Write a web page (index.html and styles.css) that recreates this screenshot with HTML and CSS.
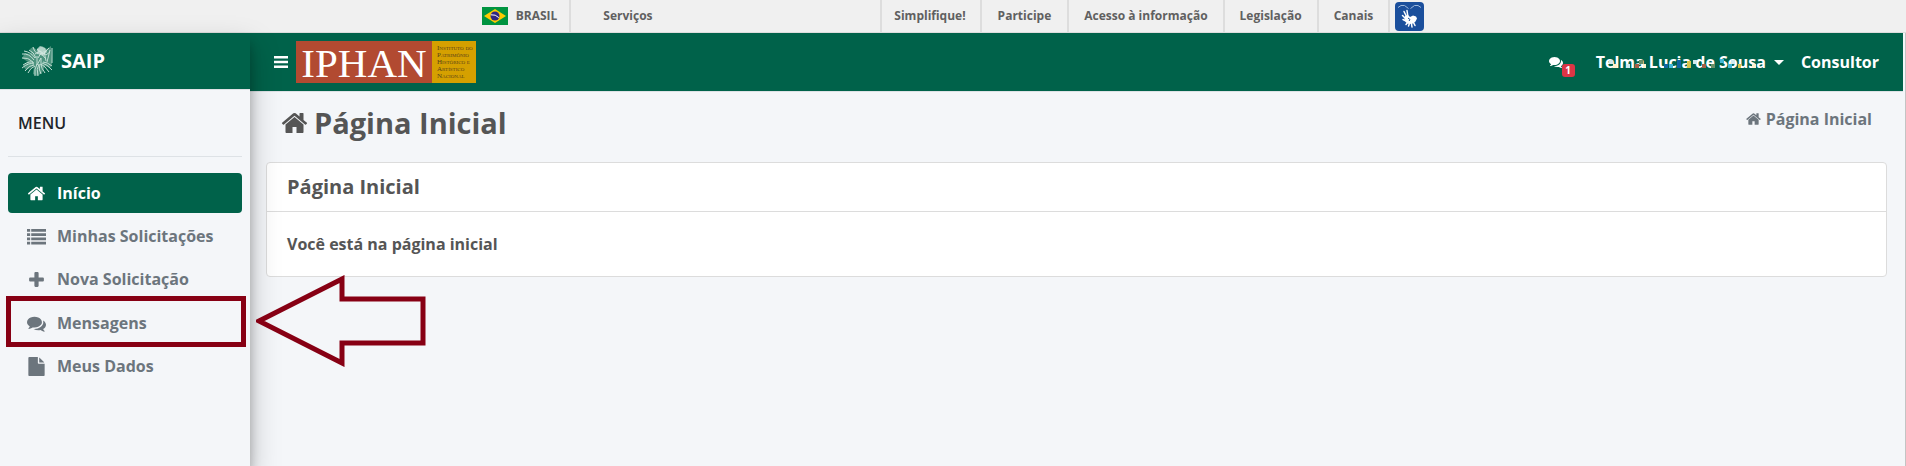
FILE: index.html
```
<!DOCTYPE html>
<html lang="pt-BR">
<head>
<meta charset="utf-8">
<title>SAIP - Página Inicial</title>
<link rel="stylesheet" href="styles.css">
</head>
<body>
<svg class="defs" aria-hidden="true">
  <symbol id="home" viewBox="0 0 1664 1792"><path d="M1408 992v480q0 26-19 45t-45 19h-384v-384h-256v384h-384q-26 0-45-19t-19-45v-480q0-1 .5-3t.5-3l575-474 575 474q1 2 1 6zm223-69l-62 74q-8 9-21 11h-3q-13 0-21-7l-692-577-692 577q-12 8-24 7-13-2-21-11l-62-74q-8-10-7-23.5t11-21.5l719-599q32-26 76-26t76 26l244 204v-195q0-14 9-23t23-9h192q14 0 23 9t9 23v408l219 182q10 8 11 21.5t-7 23.5z"/></symbol>
  <symbol id="comments" viewBox="0 0 1792 1792"><path d="M1408 768q0 139-94 257t-256.5 186.5-353.5 68.5q-86 0-176-16-124 88-278 128-36 9-86 16h-3q-11 0-20.5-8t-11.5-21q-1-3-1-6.5t.5-6.5 2-6l2.5-5 3.5-5.5 4-5 4.5-5 4-4.5q5-6 23-25t26-29.5 22.5-29 25-38.5 20.5-44q-124-72-195-177t-71-224q0-139 94-257t256.500-186.500 353.500-68.500 353.500 68.500 256.500 186.500 94 257zm384 256q0 120-71 224.500t-195 176.500q10 24 20.500 44t25 38.500 22.500 29 26 29.500 23 25q1 1 4 4.500t4.500 5 4 5 3.500 5.500l2.500 5 2 6 .5 6.500-1 6.500q-3 14-13 22t-22 7q-50-7-86-16-154-40-278-128-90 16-176 16-271 0-472-132 58 4 88 4 161 0 309-45t264-129q125-92 192-212t67-254q0-77-23-152 129 71 204 178t75 230z"/></symbol>
</svg>

<div class="govbar">
  <a class="gov-brasil" href="#">
    <svg class="flag" viewBox="0 0 26 18" aria-hidden="true"><path fill="#009440" d="M0 0h26v18H0z"/><path fill="#ffcb00" d="M13 2l11 7-11 7L2 9z"/><circle cx="13" cy="9" r="4.500" fill="#302681"/><path d="M8.800 7.800q4.800-.6 8 2.800" fill="none" stroke="#fff"/></svg>
    BRASIL</a>
  <a class="gov-services" href="#">Serviços</a>
  <nav class="gov-links">
    <a href="#">Simplifique!</a><a href="#">Participe</a><a href="#">Acesso à informação</a><a href="#">Legislação</a><a href="#">Canais</a>
  </nav>
  <a class="libras" href="#" aria-label="VLibras"><svg viewBox="0 0 29 29"><rect width="29" height="29" rx="4" fill="#1b4f9c"/><path d="M3 5.500l3-2 3.500 0 4 3M26 5.500l-3-2-3.500 0-4 3" fill="none" stroke="#9db8dc"/><g fill="none" stroke="#fff" stroke-width="1.500" stroke-linecap="round"><path d="M9 9.500l2.500 5M12 8.500l.8 5.500M7.500 13.500l3 3M8 17.500l3 1.500M20 23.500l-2-4M17 25l-.8-5M13.500 24l1.500-4M11 22.500l2.500-3"/></g><path fill="#fff" d="M10 14l3-1 2 2 3-1.500 3 1 1 2-1.500 3-2.500 2-4 .5-3-1.500-1.500-3z"/><path d="M13 16l2 1.500-1 1.500" fill="none" stroke="#1b4f9c"/></svg></a>
</div>

<div class="shell">
  <aside class="sidebar">
    <a class="brand" href="#">
      <svg class="crest" viewBox="0 0 32 32" aria-hidden="true"><path fill="#8dbcaa" opacity=".55" d="M12 2l4 3 5-4 5 3 4-3 1 18-2 4-5-2-3 7-5 3-4-2 1-8-8 4-3-4 5-4-6-4 3-5 6 1-1-5z"/><g fill="none" stroke="#c3dfd5"><path d="M1 9q7-1 12 6M3 6q7 1 11 7M1 13q6-1 11 4M2 20q7-5 11-2M1 23q7-6 12-4M4 26q4-6 9-6M7 28q2-5 7-7M14 31q-1-7 2-12M17 31q-2-7 1-12M20 29q-3-5-1-10M24 28q-4-5-4-9M28 27q-4-6-8-8M31 25q-5-6-10-7M31 21q-5-4-9-4M8 5q5 2 7 8M12 2q1 5 5 7"/><path d="M16 4l6 5 6-6M14 9l5-3 6 4 4-3M17 13l3-5 4 5M16 11v9l4-7v7M23 6l2 10M29 5l-3 12M31 3v15"/></g><path fill="#d5e8e1" opacity=".75" d="M16 4l3-3 5 2 2 4-4 4-5-2z"/></svg>
      <span>SAIP</span></a>
    <div class="menu-title">MENU</div>
    <nav class="menu">
      <a class="active" href="#"><svg><use href="#home"/></svg>Início</a>
      <a href="#"><svg viewBox="0 0 18 18"><path d="M0 2h3v2.500H0zM4 2h14v2.500H4zM0 6h3v2.500H0zM4 6h14v2.500H4zM0 10h3v2.500H0zM4 10h14v2.500H4zM0 14h3v2.500H0zM4 14h14v2.500H4z"/></svg>Minhas Solicitações</a>
      <a href="#"><svg viewBox="0 0 18 18"><path d="M8 2h2q1 0 1 1v4h4q1 0 1 1v2q0 1-1 1h-4v4q0 1-1 1H8q-1 0-1-1v-4H3q-1 0-1-1V8q0-1 1-1h4V3q0-1 1-1z"/></svg>Nova Solicitação</a>
      <a class="marked" href="#"><svg><use href="#comments"/></svg>Mensagens
        <span class="frame"></span>
        <svg class="arrow" viewBox="0 0 170 92" aria-hidden="true"><path d="M3 46L86 4v20h81v44H86v20z" fill="none" stroke="#870014" stroke-width="5"/></svg></a>
      <a href="#"><svg viewBox="0 0 1792 1792"><path d="M1152 512v-472q22 14 36 28l408 408q14 14 28 36h-472zm-128 32q0 40 28 68t68 28h544v1056q0 40-28 68t-68 28h-1344q-40 0-68-28t-28-68v-1600q0-40 28-68t68-28h800v544z"/></svg>Meus Dados</a>
    </nav>
  </aside>

  <div class="main">
    <header class="topbar">
      <button class="toggle" type="button" aria-label="Menu"><svg viewBox="0 0 14 12"><path d="M0 0h14v2.500H0zM0 4.700h14v2.500H0zM0 9.500h14V12H0z"/></svg></button>
      <a class="iphan" href="#"><span class="iphan-name">IPHAN</span><span class="iphan-full"><span>Instituto do</span><span>Patrimônio</span><span>Histórico e</span><span>Artístico</span><span>Nacional</span></span></a>
      <a class="notice" href="#" aria-label="Mensagens"><svg><use href="#comments"/></svg><span class="badge">1</span></a>
      <button class="user" type="button"><span class="user-name">Telma Lucia de Sousa<svg class="mosaic" viewBox="0 0 172 14" aria-hidden="true"><path fill="#cfe9ef" d="M13 5h4v4h-4zM30 9h4v4h-4zM98 5h4v4h-4zM136 5h4v4h-4z"/><path fill="#fff3cf" d="M47 9h4v4h-4zM17 9h4v4h-4zM158 9h4v4h-4z"/><path fill="#a55f46" d="M39 9h4v4h-4zM107 9h4v4h-4z"/><path fill="#1064a0" d="M69 9h4v4h-4zM82 5h4v8h-4z"/><path fill="#43b8d8" d="M74 9h4v4h-4zM125 4h4v4h-4zM133 9h4v4h-4z"/><path fill="#d8c44b" d="M92 6h4v7h-4zM143 9h4v4h-4z"/><path fill="#6a9067" d="M43 5h4v4h-4zM116 9h4v4h-4z"/></svg></span><span class="caret"></span></button>
      <span class="role">Consultor</span>
    </header>
    <main>
      <div class="heading">
        <h1><svg><use href="#home"/></svg>Página Inicial</h1>
        <a class="crumb" href="#"><svg><use href="#home"/></svg>Página Inicial</a>
      </div>
      <section class="card">
        <h2>Página Inicial</h2>
        <p>Você está na página inicial</p>
      </section>
    </main>
  </div>
</div>
</body>
</html>
```
FILE: styles.css
```
* { box-sizing: border-box; }
body {
  margin: 0;
  min-height: 100vh;
  display: flex;
  flex-direction: column;
  background: #f4f6f9;
  color: #555;
  font: 700 16px/24px "Open Sans", sans-serif;
}
a { color: inherit; text-decoration: none; }
button { font: inherit; color: inherit; background: none; border: 0; padding: 0; }
svg { fill: currentColor; flex: none; }
.defs { position: absolute; width: 0; height: 0; }

.govbar {
  display: flex;
  justify-content: center;
  height: 33px;
  background: #f0f0f0;
  border-bottom: 1px solid #ddd;
  color: #606060;
  font-size: 12px;
  line-height: 32px;
}
.gov-brasil { display: flex; align-items: center; gap: 8px; padding-right: 12px; border-right: 2px solid #ddd; }
.flag { width: 26px; height: 18px; }
.gov-services { width: 309px; padding-left: 32px; }
.gov-links { display: flex; }
.gov-links a { padding: 0 15px; border-left: 2px solid #ddd; }
.gov-links a:first-child { padding: 0 14px 0 12px; }
.gov-links a:nth-child(2) { padding: 0 16px; }
.gov-links a:last-child { border-right: 2px solid #ddd; }
.libras { margin: 2px 0 0 5px; height: 29px; }
.libras svg { display: block; width: 29px; height: 29px; }

.shell { flex: 1; display: flex; }
.sidebar {
  width: 250px;
  flex: none;
  position: relative;
  z-index: 1;
  background: #f4f6f9;
  box-shadow: 0 14px 28px rgba(0,0,0,.25), 0 10px 10px rgba(0,0,0,.22);
}
.brand {
  display: flex;
  align-items: center;
  gap: 8px;
  height: 57px;
  padding-left: 21px;
  background: #00624a;
  border-bottom: 1px solid #dee2e6;
  color: #fff;
  font-size: 20px;
}
.crest { width: 32px; height: 32px; }
.menu-title {
  margin: 0 8px 16px;
  padding: 21px 10px;
  border-bottom: 1px solid #dee2e6;
  color: #212529;
  font-weight: 600;
}
.menu { display: flex; flex-direction: column; gap: 3px; padding: 0 8px; }
.menu a {
  display: flex;
  align-items: center;
  gap: 11px;
  height: 40px;
  padding-left: 19px;
  border-radius: 4px;
  color: #6c757d;
}
.menu a > svg:first-child { width: 19px; height: 19px; }
.menu .active { background: #00624a; color: #fff; }
.menu .marked { position: relative; margin-top: 1px; }
.frame { position: absolute; inset: -7px -4px -4px -2px; border: 5px solid #870014; }
.marked .arrow { position: absolute; left: 248px; top: -28px; width: 170px; height: 92px; }

.main { flex: 1; min-width: 0; border-right: 1px solid #c4c4c4; }
.topbar {
  display: flex;
  align-items: center;
  height: 59px;
  margin-right: 2px;
  padding: 0 24px;
  background: #00624a;
  border-bottom: 1px solid #dee2e6;
  color: #fff;
}
.toggle { display: flex; margin-right: 8px; }
.toggle svg { width: 14px; height: 12px; }
.iphan { display: flex; height: 42px; margin-right: auto; }
.iphan-name { width: 136px; background: #b24a31; font: 41px/44px "Liberation Serif", serif; text-align: center; }
.iphan-full {
  display: flex;
  flex-direction: column;
  justify-content: center;
  width: 44px;
  padding: 0 5px;
  background: #d5a000;
  color: #59421a;
  font: 7px/7px "Liberation Serif", serif;
  font-variant: small-caps;
  white-space: nowrap;
}
.notice { position: relative; margin-right: 33px; }
.notice svg { display: block; width: 14px; height: 14px; }
.badge {
  position: absolute;
  left: 13px;
  top: 9px;
  width: 13px;
  height: 13px;
  border-radius: 3px;
  background: #dc3545;
  font-size: 10px;
  line-height: 13px;
  text-align: center;
}
.user { display: flex; align-items: center; gap: 8px; margin-right: 17px; }
.user-name { position: relative; }
.mosaic { position: absolute; left: 0; top: 5px; width: 100%; height: 14px; shape-rendering: crispEdges; }
.caret { border: 5px solid transparent; border-top-color: #fff; border-bottom: 0; }

main { padding: 0 18px 0 16px; }
.heading { display: flex; justify-content: space-between; padding: 15px 15px 0; height: 70px; }
h1 { display: flex; align-items: center; gap: 6px; height: 32px; margin: 0; font-size: 29px; line-height: 32px; }
h1 svg { width: 27px; height: 28px; }
.crumb { display: flex; align-items: center; gap: 5px; height: 24px; color: #6c757d; }
.crumb svg { width: 15px; height: 16px; }
.card { background: #fff; border: 1px solid #dcdcdc; border-radius: 4px; }
.card h2 { margin: 0; padding: 12px 20px; border-bottom: 1px solid #dcdcdc; font-size: 20px; line-height: 24px; }
.card p { margin: 0; padding: 20px; }
```
